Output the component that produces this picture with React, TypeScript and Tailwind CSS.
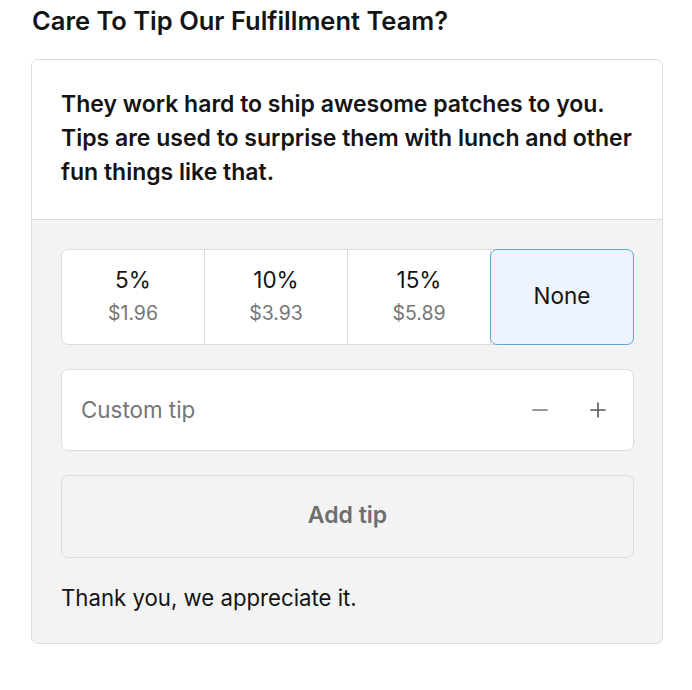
import { Minus, Plus } from "lucide-react";

const tips = [
  { pct: "5%", amount: "$1.96" },
  { pct: "10%", amount: "$3.93" },
  { pct: "15%", amount: "$5.89" },
];

export default function App() {
  return (
    <div className="min-h-[690px] w-[692px] bg-white px-[31px] pt-[5px] font-['Inter',sans-serif] text-[#141414]">
      <h2 className="pl-px text-[25.5px] font-semibold leading-[32px]">
        Care To Tip Our Fulfillment Team?
      </h2>

      <div className="mt-[22px] w-[632px] overflow-hidden rounded-[7px] border border-[#dcdcdc]">
        {/* intro */}
        <div className="bg-white pb-[30px] pl-[29px] pr-[16px] pt-[27px]">
          <p className="text-[23px] font-semibold leading-[34px]">
            They work hard to ship awesome patches to you.
            <br />
            Tips are used to surprise them with lunch and other
            <br />
            fun things like that.
          </p>
        </div>

        <div className="border-t border-[#dcdcdc] bg-[#f3f3f3] pb-[30px] pl-[29px] pr-[28px] pt-[29px]">
          {/* preset tips */}
          <div className="flex h-[96px] rounded-[7px] border border-[#dcdcdc] bg-white">
            {tips.map((t) => (
              <button
                key={t.pct}
                className="flex flex-1 flex-col items-center justify-center border-r border-[#dcdcdc] pb-[2px]"
              >
                <span className="text-[22.5px] leading-[32px] text-[#141414]">{t.pct}</span>
                <span className="mt-[2px] text-[19.5px] leading-[30px] text-[#767676]">{t.amount}</span>
              </button>
            ))}
            <button className="-m-px flex flex-1 items-center justify-center rounded-[7px] border border-[#5aaad8] bg-[#eef4fd] pb-[2px] text-[22.5px] text-[#141414]">
              None
            </button>
          </div>

          {/* custom tip */}
          <div className="mt-[24px] flex h-[82px] items-center rounded-[7px] border border-[#dcdcdc] bg-white pl-[19px] pr-[23px]">
            <span className="flex-1 text-[22.4px] text-[#767676]">Custom tip</span>
            <Minus className="h-[24px] w-[24px] text-[#777]" strokeWidth={1.6} />
            <Plus className="ml-[34px] h-[24px] w-[24px] text-[#555]" strokeWidth={1.6} />
          </div>

          {/* add tip */}
          <button className="mt-[24px] flex h-[83px] w-full items-center justify-center rounded-[7px] border border-[#dcdcdc] bg-[#f3f3f3] pb-[2px] text-[23px] font-semibold text-[#6e6e6e]">
            Add tip
          </button>

          <p className="mt-[25px] text-[22.2px] leading-[30px] text-[#141414]">
            Thank you, we appreciate it.
          </p>
        </div>
      </div>
    </div>
  );
}
